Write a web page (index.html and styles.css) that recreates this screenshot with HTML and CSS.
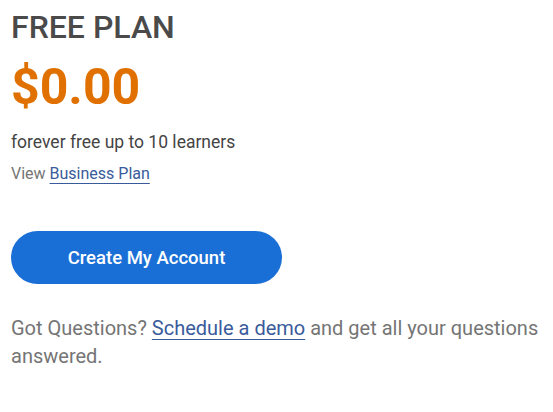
FILE: index.html
```html
<!DOCTYPE html>
<html>
<head>
<meta charset="utf-8">
<link rel="stylesheet" href="styles.css">
</head>
<body>
<div class="plan">
  <h1 class="plan-title">FREE PLAN</h1>
  <div class="price">$0.00</div>
  <p class="desc">forever free up to 10 learners</p>
  <p class="view">View <a href="#" class="link">Business Plan</a></p>
  <a href="#" class="cta">Create My Account</a>
  <p class="questions">Got Questions? <a href="#" class="link">Schedule a demo</a> and get all your questions answered.</p>
</div>
</body>
</html>
```
FILE: styles.css
```css
html, body {
  margin: 0;
  padding: 0;
  background: #fff;
}
body {
  font-family: Roboto, "Liberation Sans", sans-serif;
}
.plan {
  display: flex;
  flex-direction: column;
  align-items: flex-start;
  padding: 8px 12px 0 11px;
}
.plan-title {
  margin: 0;
  font-size: 32px;
  font-weight: 500;
  line-height: 38px;
  color: #4a4a4a;
}
.price {
  margin-top: 12px;
  font-size: 50px;
  font-weight: 700;
  line-height: 58px;
  color: #e07000;
}
.desc {
  margin: 14px 0 0;
  font-size: 17.5px;
  line-height: 24px;
  color: #444;
}
.view {
  margin: 9px 0 0;
  font-size: 16px;
  line-height: 22px;
  color: #757575;
}
.link {
  color: #3a5b9b;
  text-decoration: underline;
  text-decoration-thickness: 1px;
  text-underline-offset: 4px;
}
.cta {
  margin-top: 46px;
  width: 271px;
  height: 53px;
  border-radius: 27px;
  background: #1a6fd6;
  color: #fff;
  font-size: 18.5px;
  font-weight: 500;
  display: flex;
  align-items: center;
  justify-content: center;
  text-decoration: none;
}
.questions {
  margin: 30px 0 0;
  font-size: 20px;
  line-height: 28px;
  color: #757575;
}
```
